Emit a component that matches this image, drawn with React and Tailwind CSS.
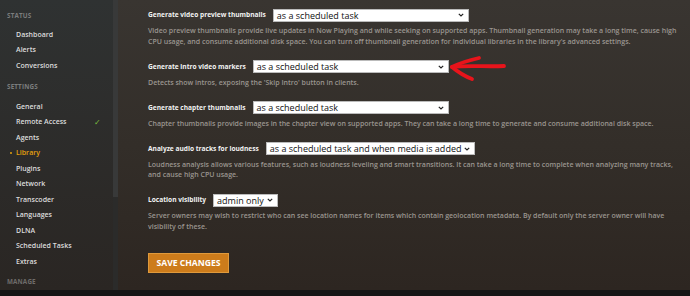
import React from 'react';

// --- SIDEBAR DATA ---
const statusItems = ['Dashboard', 'Alerts', 'Conversions'];
const settingsItems = [
  'General', 'Remote Access', 'Agents', 'Library', 'Plugins', 'Network',
  'Transcoder', 'Languages', 'DLNA', 'Scheduled Tasks', 'Extras',
];

// --- SETTINGS ROWS ---
const rows = [
  {
    label: 'Generate video preview thumbnails',
    value: 'as a scheduled task',
    width: 'w-[196px]',
    desc: [
      'Video preview thumbnails provide live updates in Now Playing and while seeking on supported apps. Thumbnail generation may take a long time, cause high',
      "CPU usage, and consume additional disk space. You can turn off thumbnail generation for individual libraries in the library's advanced settings.",
    ],
  },
  {
    label: 'Generate intro video markers',
    value: 'as a scheduled task',
    width: 'w-[196px]',
    desc: ["Detects show intros, exposing the 'Skip Intro' button in clients."],
  },
  {
    label: 'Generate chapter thumbnails',
    value: 'as a scheduled task',
    width: 'w-[196px]',
    desc: ['Chapter thumbnails provide images in the chapter view on supported apps. They can take a long time to generate and consume additional disk space.'],
  },
  {
    label: 'Analyze audio tracks for loudness',
    value: 'as a scheduled task and when media is added',
    width: '',
    desc: [
      'Loudness analysis allows various features, such as loudness leveling and smart transitions. It can take a long time to complete when analyzing many tracks,',
      'and cause high CPU usage.',
    ],
  },
  {
    label: 'Location visibility',
    value: 'admin only',
    width: '',
    desc: [
      'Server owners may wish to restrict who can see location names for items which contain geolocation metadata. By default only the server owner will have',
      'visibility of these.',
    ],
  },
];

function Chevron() {
  return (
    <svg width="6" height="4" viewBox="0 0 6 4" className="shrink-0">
      <path d="M0.8 0.8 L3 3 L5.2 0.8" fill="none" stroke="#222" strokeWidth="1.2" />
    </svg>
  );
}

function FakeSelect({ value, width }) {
  return (
    <div className={`${width} h-[13px] bg-white border border-[#bbb] flex items-center justify-between pl-[3px] pr-[4px] gap-[3px]`}>
      <span className="text-[9px] leading-none text-[#111] whitespace-nowrap font-['Open_Sans',sans-serif]">{value}</span>
      <Chevron />
    </div>
  );
}

export default function App() {
  return (
    <div className="w-[690px] h-[296px] flex flex-col overflow-hidden font-['Open_Sans',sans-serif] relative">
      <div className="flex flex-1 min-h-0">
        {/* SIDEBAR */}
        <aside className="w-[113px] bg-gradient-to-b from-[#2f3232] to-[#2a2623] pt-[10px]">
          <div className="h-[12px] flex items-center pl-[7px] text-[6.3px] font-bold uppercase text-[#7b7d7d] tracking-wide">Status</div>
          <div className="mt-[5px]">
            {statusItems.map((it) => (
              <div key={it} className="h-[15.5px] flex items-center pl-[16px] text-[7px] font-semibold text-[#dcdcdc]">{it}</div>
            ))}
          </div>
          <div className="mt-[7.5px] h-[12px] flex items-center pl-[7px] text-[6.3px] font-bold uppercase text-[#7b7d7d] tracking-wide">Settings</div>
          <div className="mt-[6px]">
            {settingsItems.map((it) => (
              <div key={it} className="h-[15.5px] flex items-center pl-[16px] pr-[12px] relative">
                {it === 'Library' && <span className="absolute left-[10px] top-[6.5px] w-[2px] h-[2px] bg-[#e5a00d] rounded-full" />}
                <span className={`text-[7px] font-semibold ${it === 'Library' ? 'text-[#e5a00d]' : 'text-[#dcdcdc]'}`}>{it}</span>
                {it === 'Remote Access' && <span className="ml-auto text-[8px] text-[#7cbb3f]">✓</span>}
              </div>
            ))}
          </div>
          <div className="mt-[6px] h-[12px] flex items-center pl-[7px] text-[6.3px] font-bold uppercase text-[#6e6c6a] tracking-wide">Manage</div>
        </aside>

        {/* SCROLLBAR */}
        <div className="w-[5px] bg-[#2b2b2a]">
          <div className="h-[197px] bg-[#383939]" />
        </div>

        {/* MAIN */}
        <main className="flex-1 bg-gradient-to-b from-[#393531] via-[#332e29] to-[#2d2621] pl-[30px] pt-[8px]">
          {rows.map((r) => (
            <div key={r.label} className="mb-[12.5px]">
              <div className="h-[14px] flex items-center gap-[7px]">
                <span className="text-[6.6px] font-bold text-[#f2f2f2] whitespace-nowrap">{r.label}</span>
                <FakeSelect value={r.value} width={r.width} />
              </div>
              <div className="mt-[4px] text-[7px] leading-[10.5px] text-[#9a958f] font-semibold whitespace-nowrap">
                {r.desc.map((d, i) => (
                  <div key={i}>{d}</div>
                ))}
              </div>
            </div>
          ))}
          <button className="mt-[8.5px] w-[81px] h-[20px] bg-[#cd7c1b] border border-[#df9a3c] text-white text-[8.6px] font-bold uppercase">
            Save Changes
          </button>
        </main>
      </div>
      <div className="h-[6px] bg-[#161616]" />

      {/* RED ANNOTATION ARROW */}
      <svg className="absolute left-[446px] top-[53px]" width="64" height="32" viewBox="0 0 64 32">
        <g fill="none" stroke="#e8141b" strokeWidth="3.8" strokeLinecap="round" strokeLinejoin="round">
          <path d="M6 14 C 22 12, 40 14, 58 13" />
          <path d="M6 14 C 14 10, 24 7, 33 5" />
          <path d="M6 14 C 12 19, 18 23, 26 26" />
        </g>
      </svg>
    </div>
  );
}
